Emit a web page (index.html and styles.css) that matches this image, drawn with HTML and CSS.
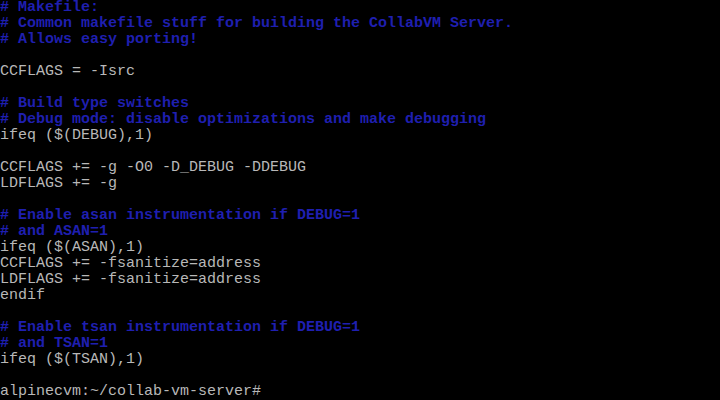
FILE: index.html
```html
<!DOCTYPE html>
<html lang="en">
  <head>
    <meta charset="UTF-8" />
    <meta name="viewport" content="width=device-width, initial-scale=1.0" />
    <title>CollabVM Console</title>
    <link rel="stylesheet" href="styles.css">
  </head>
  <body>
    <div class="screen">
      <div class="line comment"># Makefile:</div>
      <div class="line comment"># Common makefile stuff for building the CollabVM Server.</div>
      <div class="line comment"># Allows easy porting!</div>
      <div class="line"></div>
      <div class="line">CCFLAGS = -Isrc</div>
      <div class="line"></div>
      <div class="line comment"># Build type switches</div>
      <div class="line comment"># Debug mode: disable optimizations and make debugging</div>
      <div class="line">ifeq ($(DEBUG),1)</div>
      <div class="line"></div>
      <div class="line">CCFLAGS += -g -O0 -D_DEBUG -DDEBUG</div>
      <div class="line">LDFLAGS += -g</div>
      <div class="line"></div>
      <div class="line comment"># Enable asan instrumentation if DEBUG=1</div>
      <div class="line comment"># and ASAN=1</div>
      <div class="line">ifeq ($(ASAN),1)</div>
      <div class="line">CCFLAGS += -fsanitize=address</div>
      <div class="line">LDFLAGS += -fsanitize=address</div>
      <div class="line">endif</div>
      <div class="line"></div>
      <div class="line comment"># Enable tsan instrumentation if DEBUG=1</div>
      <div class="line comment"># and TSAN=1</div>
      <div class="line">ifeq ($(TSAN),1)</div>
      <div class="line"></div>
      <div class="line">alpinecvm:~/collab-vm-server#</div>
    </div>
  </body>
</html>
```

FILE: styles.css
```css
html,
body {
  margin: 0;
  padding: 0;
  background-color: #000;
}
.screen {
  width: 720px;
  height: 400px;
  overflow: hidden;
  background-color: #000;
  color: #b8b8b8;
  font-family: "Liberation Mono", "DejaVu Sans Mono", monospace;
  font-size: 15px;
}
.line {
  height: 16px;
  line-height: 16px;
  white-space: pre;
}
.comment {
  color: #1f1fb0;
  font-weight: bold;
}
```
